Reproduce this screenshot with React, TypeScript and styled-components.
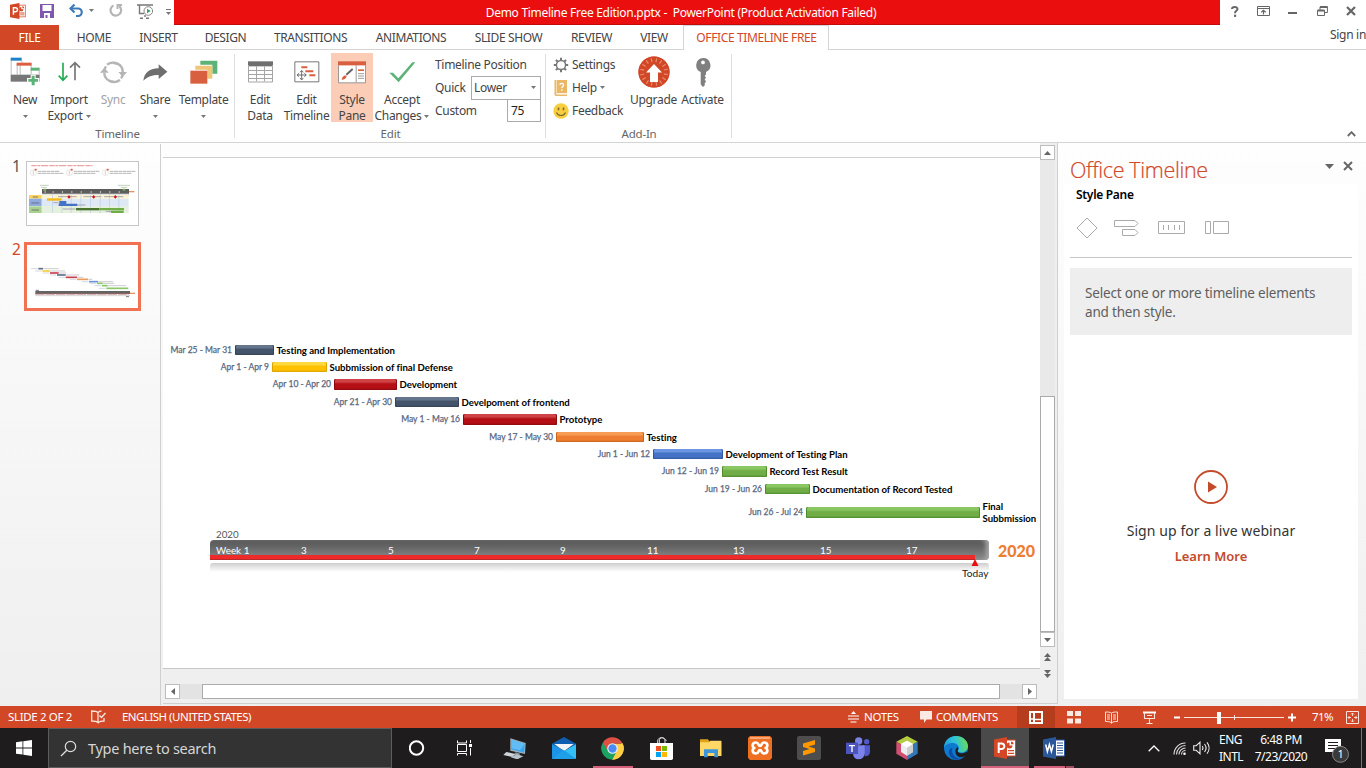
import React from 'react';
import styled, { createGlobalStyle, css } from 'styled-components';

const UI = '"Noto Sans", "Open Sans", sans-serif';
const SLIDE = 'Lato, "Liberation Sans", sans-serif';
const ORANGE = '#d24726';

const Global = createGlobalStyle`
  * { box-sizing: border-box; }
  body { margin: 0; background: #fff; overflow: hidden; font-family: ${UI}; font-size: 12px; letter-spacing: -0.3px; color: #444; }
  svg { display: block; flex: none; }
`;

const Window = styled.div`
  width: 1366px;
  height: 768px;
  display: flex;
  flex-direction: column;
  background: #fff;
  white-space: nowrap;
`;

/* ---------- title bar ---------- */
const TitleBar = styled.header`
  display: flex;
  height: 25px;
`;
const QuickAccess = styled.div`
  width: 174px;
  display: flex;
  align-items: flex-start;
  padding-left: 10px;
`;
const Slot = styled.div<{ $ml?: number; $mt?: number }>`
  margin-left: ${(p) => p.$ml ?? 0}px;
  margin-top: ${(p) => p.$mt ?? 0}px;
`;
const Caption = styled.div`
  width: 1046px;
  background: #ea0f0e;
  border-bottom: 1px solid #c00c0b;
  color: #fff;
  text-align: center;
  line-height: 26px;
  letter-spacing: -0.29px;
  padding-right: 32px;
`;
const WindowControls = styled.div`
  flex: 1;
  display: flex;
  padding-left: 10px;
`;

/* ---------- tabs ---------- */
const TabRow = styled.nav`
  display: flex;
  height: 25px;
  border-bottom: 1px solid #d4d4d4;
  line-height: 26px;
`;
const FileTab = styled.div`
  width: 59px;
  height: 25px;
  margin-right: 2px;
  background: ${ORANGE};
  color: #fff;
  text-align: center;
`;
const Tab = styled.div<{ $w: number; $active?: boolean }>`
  width: ${(p) => p.$w}px;
  text-align: center;
  letter-spacing: -0.38px;
  padding-left: 1px;
  ${(p) =>
    p.$active &&
    css`
      height: 25px;
      margin-left: 3px;
      background: #fff;
      border: 1px solid #d4d4d4;
      border-bottom: none;
      color: ${ORANGE};
      line-height: 24px;
    `}
`;
const SignIn = styled.div`
  margin-left: auto;
  line-height: 20px;
`;

/* ---------- ribbon ---------- */
const Ribbon = styled.section`
  display: flex;
  height: 93px;
  border-bottom: 1px solid #d4d4d4;
`;
const Group = styled.div<{ $w: number; $pl: number }>`
  width: ${(p) => p.$w}px;
  display: flex;
  flex-direction: column;
  padding-top: 3px;
  background: linear-gradient(#dedede, #dedede) right 4px / 1px 84px no-repeat;
  & > div:first-child { padding-left: ${(p) => p.$pl}px; }
`;
const GroupBody = styled.div`
  display: flex;
  height: 72px;
`;
const GroupName = styled.div`
  text-align: center;
  line-height: 18px;
  height: 17px;
  font-size: 11.5px;
  letter-spacing: -0.2px;
  color: #666;
`;
const BigButton = styled.button<{ $w: number; $on?: boolean; $off?: boolean }>`
  width: ${(p) => p.$w}px;
  height: 69px;
  border: 0;
  padding: 0;
  display: flex;
  flex-direction: column;
  align-items: center;
  justify-content: flex-start;
  background: ${(p) => (p.$on ? '#fbcdb7' : 'transparent')};
  color: ${(p) => (p.$off ? '#a3a3a3' : '#444')};
  font: 12px/16px ${UI};
  letter-spacing: -0.3px;
`;
const IconArea = styled.div`
  height: 38px;
  flex: none;
  margin-bottom: 1px;
  display: flex;
  align-items: center;
`;
const BtnLine = styled.span`
  height: 16px;
  flex: none;
  display: flex;
  align-items: center;
  gap: 3px;
`;
const PositionForm = styled.div`
  width: 106px;
  margin-left: 4px;
`;
const FormRow = styled.div`
  display: flex;
  align-items: center;
  justify-content: space-between;
  height: 23px;
`;
const Combo = styled.div`
  width: 70px;
  height: 24px;
  border: 1px solid #ababab;
  display: flex;
  align-items: center;
  justify-content: space-between;
  padding: 0 4px 0 2px;
`;
const NumberBox = styled.div`
  width: 34px;
  height: 23px;
  border: 1px solid #ababab;
  line-height: 21px;
  padding-left: 3px;
  color: #222;
`;
const SmallList = styled.div`
  width: 75px;
`;
const SmallRow = styled.div`
  height: 23px;
  display: flex;
  align-items: center;
  gap: 3px;
`;
const Collapse = styled.div`
  margin-left: auto;
  align-self: flex-end;
  padding: 0 10px 5px 0;
`;

/* ---------- work area ---------- */
const Work = styled.main`
  display: flex;
  height: 563px;
  background: linear-gradient(#fefefe, #efefef);
`;
const Thumbs = styled.aside`
  width: 161px;
  height: 561px;
  border-right: 1px solid #cfcfcf;
  margin-top: 1px;
  padding: 17px 0 0 12px;
`;
const ThumbRow = styled.div<{ $gap?: number }>`
  display: flex;
  margin-bottom: ${(p) => p.$gap ?? 0}px;
`;
const ThumbNo = styled.div<{ $on?: boolean }>`
  width: ${(p) => (p.$on ? 12 : 14)}px;
  font-size: 15.5px;
  line-height: ${(p) => (p.$on ? 14 : 11)}px;
  letter-spacing: 0;
  color: ${(p) => (p.$on ? ORANGE : '#555')};
`;
const ThumbFrame = styled.div<{ $on?: boolean }>`
  border: ${(p) => (p.$on ? '3px solid #f07252' : '1px solid #c6c6c6')};
  background: #fff;
`;
const Editor = styled.div`
  width: 895px;
  margin-left: 2px;
  height: 561px;
  border-bottom: 1px solid #cfcfcf;
  border-right: 1px solid #cfcfcf;
  display: grid;
  grid-template-columns: 877px 1fr;
  grid-template-rows: 526px 1fr;
`;
const SlideWrap = styled.div`
  padding-top: 14px;
  height: 526px;
  background: #fdfdfd;
`;
const SlideCanvas = styled.div`
  position: relative;
  height: 512px;
  background: #fff;
  border-top: 1px solid #cfcfcf;
  border-bottom: 1px solid #c6c6c6;
  font-family: ${SLIDE};
  font-variant-ligatures: none;
`;
const Task = styled.div<{ $x: number; $y: number }>`
  position: absolute;
  right: ${(p) => 877 - p.$x}px;
  top: ${(p) => p.$y}px;
  display: flex;
  align-items: flex-start;
  gap: 3px;
`;
const TaskDate = styled.span`
  font-size: 8.5px;
  letter-spacing: 0;
  color: #5a6880;
  line-height: 11px;
  -webkit-text-stroke: 0.25px #5a6880;
`;
const TaskBar = styled.div<{ $w: number; $h: number; $c: string; $hi: string; $lo: string }>`
  width: ${(p) => p.$w}px;
  height: ${(p) => p.$h}px;
  border-radius: 1.5px;
  background: linear-gradient(${(p) => p.$hi} 0, ${(p) => p.$hi} 25%, ${(p) => p.$c} 45%, ${(p) => p.$c} 80%, ${(p) => p.$lo});
  box-shadow: inset 1px 0 0 ${(p) => p.$lo}, inset -1px 0 0 ${(p) => p.$lo};
`;
const TaskName = styled.div`
  position: absolute;
  left: 100%;
  margin-left: 2.5px;
  top: 0;
  font-size: 9.6px;
  font-weight: 700;
  letter-spacing: 0;
  line-height: 12px;
  color: #000;
`;
const Band = styled.div`
  position: absolute;
  left: 47px;
  top: 382px;
  width: 779px;
  height: 20px;
  border-radius: 4px;
  background: linear-gradient(#5a5a5a, #636363 30%, #8c8c8c);
  box-shadow: inset -5px 0 4px -2px #a8a8a8;
`;
const Elapsed = styled.div`
  position: absolute;
  left: 0;
  bottom: 0;
  width: 765px;
  height: 5px;
  background: #ee2a2a;
  border-bottom: 1px solid #b82a2a;
`;
const Reflection = styled.div`
  position: absolute;
  left: 47px;
  top: 405px;
  width: 779px;
  height: 9px;
  border-radius: 3px 3px 0 0;
  background: linear-gradient(#cdcdcd, #e6e6e6 45%, #fff);
`;
const Note = styled.span<{ $x: number; $y: number; $s: number; $c: string; $b?: boolean }>`
  position: absolute;
  left: ${(p) => p.$x}px;
  top: ${(p) => p.$y}px;
  font-size: ${(p) => p.$s}px;
  line-height: 14px;
  letter-spacing: 0;
  color: ${(p) => p.$c};
  font-weight: ${(p) => (p.$b ? 900 : 400)};
`;
const TodayMark = styled.svg`
  position: absolute;
  left: 808px;
  top: 400px;
`;
const VScroll = styled.div`
  height: 526px;
  padding-top: 2px;
  display: flex;
  flex-direction: column;
  align-items: flex-start;
  background: #efefef;
`;
const ScrollButton = styled.div<{ $bare?: boolean }>`
  width: 15px;
  height: 15px;
  border: 1px solid ${(p) => (p.$bare ? 'transparent' : '#bdbdbd')};
  background: ${(p) => (p.$bare ? 'transparent' : '#fff')};
  display: flex;
  align-items: center;
  justify-content: center;
`;
const VTrack = styled.div`
  width: 15px;
  height: 236px;
  background: #e9e9e9;
`;
const VThumb = styled.div`
  width: 15px;
  height: 236px;
  background: #fff;
  border: 1px solid #ababab;
`;
const HScroll = styled.div`
  display: flex;
  padding: 15px 0 0 2px;
  background: #efefef;
`;
const HTrack = styled.div<{ $w: number }>`
  width: ${(p) => p.$w}px;
  height: 15px;
  background: #e3e3e3;
`;
const HThumb = styled.div`
  width: 798px;
  height: 15px;
  background: #fff;
  border: 1px solid #ababab;
`;
const ScrollTail = styled.div`
  background: #efefef;
  display: flex;
  flex-direction: column;
  align-items: flex-start;
`;

/* ---------- style pane ---------- */
const Pane = styled.aside`
  flex: 1;
  padding: 12px 8px 7px 6px;
  display: flex;
  flex-direction: column;
`;
const PaneHead = styled.div`
  height: 29px;
  display: flex;
  align-items: center;
  padding: 0 5px 0 6px;
`;
const PaneTitle = styled.h1`
  margin: 0;
  flex: 1;
  font: 300 21.5px/28px "Open Sans", "Noto Sans", sans-serif;
  letter-spacing: -0.35px;
  color: ${ORANGE};
  -webkit-text-stroke: 0.2px ${ORANGE};
`;
const PaneBody = styled.div`
  flex: 1;
  background: #fff;
  padding: 0 6px;
  display: flex;
  flex-direction: column;
`;
const PaneSub = styled.h2`
  margin: 0 0 0 6px;
  font: 600 12px/22px ${UI};
  letter-spacing: -0.3px;
  color: #000;
`;
const ToolRow = styled.div`
  height: 52px;
  display: flex;
  align-items: center;
  padding: 0 0 8px 6px;
  border-bottom: 1px solid #c6c6c6;
`;
const Hint = styled.p`
  margin: 10px 0 0;
  height: 67px;
  padding: 16px 15px;
  background: #eee;
  font-size: 13.5px;
  line-height: 19px;
  letter-spacing: -0.18px;
  color: #5e5e5e;
`;
const Webinar = styled.div`
  margin-top: 135px;
  display: flex;
  flex-direction: column;
  align-items: center;
  font-size: 14px;
  letter-spacing: 0.08px;
  color: #333;
`;
const WebinarText = styled.div`
  margin-top: 14px;
  line-height: 26px;
`;
const LearnMore = styled.a`
  font-size: 13px;
  font-weight: 600;
  line-height: 25px;
  letter-spacing: 0;
  color: #c34a2b;
`;

/* ---------- status bar ---------- */
const StatusBar = styled.footer`
  height: 22px;
  background: ${ORANGE};
  color: #fff;
  display: flex;
  align-items: center;
  font-size: 11.5px;
  padding-left: 8px;
`;
const StatusText = styled.div<{ $w: number; $ls?: number }>`
  width: ${(p) => p.$w}px;
  letter-spacing: ${(p) => p.$ls ?? -0.35}px;
  line-height: 20px;
`;
const ViewButton = styled.div<{ $w: number; $on?: boolean }>`
  width: ${(p) => p.$w}px;
  height: 22px;
  display: flex;
  align-items: center;
  justify-content: center;
  background: ${(p) => (p.$on ? '#b53c1d' : 'transparent')};
`;

/* ---------- taskbar ---------- */
const TaskbarRow = styled.div`
  height: 40px;
  display: flex;
  background: #1e1c1c;
  color: #fff;
`;
const StartButton = styled.div`
  width: 48px;
  display: flex;
  align-items: center;
  justify-content: center;
`;
const Search = styled.div`
  width: 344px;
  border: 1px solid #5c5c5c;
  background: #333;
  display: flex;
  align-items: center;
  gap: 11px;
  padding-left: 11px;
  font-size: 14.5px;
  letter-spacing: -0.28px;
  color: #d6d6d6;
`;
const AppButton = styled.div<{ $on?: boolean; $line?: string }>`
  width: 49px;
  display: flex;
  align-items: center;
  justify-content: center;
  background:
    ${(p) => p.$line ?? 'linear-gradient(transparent, transparent)'},
    ${(p) => (p.$on ? 'linear-gradient(#4b4a4a, #4b4a4a) right / 48px 100% no-repeat' : 'none')};
`;
const Tray = styled.div`
  margin-left: auto;
  display: flex;
  align-items: center;
`;
const TrayText = styled.div<{ $w: number; $c?: boolean }>`
  width: ${(p) => p.$w}px;
  line-height: 17px;
  text-align: ${(p) => (p.$c ? 'center' : 'left')};
  letter-spacing: -0.5px;
`;
const ShowDesktop = styled.div`
  width: 5px;
  height: 40px;
  border-left: 1px solid #757575;
`;

/* ---------- icon helpers ---------- */
type ArtProps = { w: number; h: number; box?: string; children: React.ReactNode };
const Art = ({ w, h, box, children }: ArtProps) => (
  <svg width={w} height={h} viewBox={box ?? `0 0 ${w} ${h}`} fill="none">
    {children}
  </svg>
);
const Down = ({ c = '#777', w = 5, h = 3 }: { c?: string; w?: number; h?: number }) => (
  <Art w={w} h={h}>
    <path d={`M0 0h${w}L${w / 2} ${h}z`} fill={c} />
  </Art>
);

const PptGlyph = ({ w, h }: { w: number; h: number }) => (
  <Art w={w} h={h} box="0 0 22 22">
    <path d="M12 3h9.500v16H12z" fill="#fff" stroke={ORANGE} strokeWidth="1" />
    <path d="M15.500 5.500a3 3 0 1 0 3 3h-3z" fill={ORANGE} />
    <path d="M17 4.500a3 3 0 0 1 2.800 2.800H17zM14 13h6v1.300h-6zM14 15.700h6V17h-6z" fill={ORANGE} />
    <path d="M0 2.500 13 0v22L0 19.500z" fill={ORANGE} />
    <path d="M4.700 16V6.500h2.800a2.600 2.600 0 0 1 0 5.600H4.700" stroke="#fff" strokeWidth="2" />
  </Art>
);

const NewIcon = () => (
  <Art w={31} h={30} box="31 175 93 90">
    <path d="M34.500 186v42M52.500 194v34M61.500 200v28M94.500 200v28M118.500 216v12M67 186v6" stroke="#bbb" strokeWidth="3" />
    <path d="M33 177h33v9H33z" fill="#1a82c6" />
    <path d="M51 192h45v9H51z" fill="#dc5f41" />
    <path d="M93 207h27v9H93z" fill="#5cb377" />
    <path d="M33 228h87v21H33z" fill="#777" />
    <path d="M93 228h15v10h11v15h-11v9H93v-9H82v-15h11z" fill="#fff" />
    <path d="M96 231h9v10h10v8h-10v11h-9v-11H86v-8h10z" fill="#5cb377" />
  </Art>
);
const ImportIcon = () => (
  <Art w={24} h={22} box="171 183 72 66">
    <path d="M189 188v53M176 227l13 14 13-14" stroke="#23ad52" strokeWidth="5" />
    <path d="M225 241v-52M210 203l15-15 15 15" stroke="#777" strokeWidth="5" />
  </Art>
);
const SyncIcon = () => (
  <Art w={27} h={23} box="300 182 81 69">
    <path d="M321 193a29 27 0 0 1 47 22M360 239a29 27 0 0 1-47-22" stroke="#b5b5b5" strokeWidth="7" />
    <path d="M313 212a28 26 0 0 1 5-14M368 220a28 26 0 0 1-5 14M327 241a29 27 0 0 0 15 3M354 191a29 27 0 0 0-15-3" stroke="#b5b5b5" strokeWidth="7" />
    <path d="m300 217 13-15 13 15zM355 215l13 15 13-15z" fill="#b5b5b5" />
  </Art>
);
const ShareIcon = () => (
  <Art w={25} h={17} box="429 190 75 51">
    <path d="M430 240c3-22 16-37 46-37v-12l26 22-26 22v-12c-20 0-32 4-46 17z" fill="#6e6e6e" />
  </Art>
);
const TemplateIcon = () => (
  <Art w={28} h={24} box="566 181 84 72">
    <path d="M597 183h51v39h-15v-27h-36z" fill="#5cb377" />
    <path d="M582 198h51v39h-15v-27h-36z" fill="#eec579" />
    <path d="M567 213h51v39h-51z" fill="#d95f41" />
  </Art>
);
const GridIcon = () => (
  <Art w={25} h={22} box="744 188 75 66">
    <path d="M744 189h75v15h-75z" fill="#6f6f6f" />
    <path d="M745.500 200v51h72v-51M769.500 204v45M793.500 204v45M745 216.500h73M745 228.500h73M745 240.500h73" stroke="#a5a5a5" strokeWidth="3" />
  </Art>
);
const EditTimelineIcon = () => (
  <Art w={26} h={22} box="881 188 78 66">
    <path d="M883.500 190.500h72v60h-72z" stroke="#777" strokeWidth="3" fill="#fff" />
    <path d="M903 204h18v6h-18zM915 216h24v6h-24zM927 228h18v6h-18z" fill="#d95f41" />
    <path d="M904 218v25M892 230h25M899 222l5-6 5 6M899 239l5 6 5-6M896 225l-6 5 6 5M912 225l6 5-6 5" stroke="#555" strokeWidth="2.500" />
  </Art>
);
const StylePaneIcon = () => (
  <Art w={28} h={23} box="24 185 84 69">
    <path d="M25.500 198v52.500h81V198M78.500 198v52" stroke="#999" strokeWidth="3" fill="#fff" />
    <path d="M24 186h84v12H24z" fill="#d95f41" />
    <path d="M84 210h18v5H84z" fill="#d95f41" />
    <path d="M84 223h18M84 230h18M84 237h18" stroke="#888" strokeWidth="2.500" />
    <path d="M68 209 49 226" stroke="#666" strokeWidth="6" />
    <path d="M35 241c1-10 8-15 15-12-1 8-6 12-15 12z" fill="#d95f41" />
  </Art>
);
const AcceptIcon = () => (
  <Art w={27} h={21} box="176 184 81 63">
    <path d="M177 216h11l16 17 42-48h9l-50 60z" fill="#5cb377" />
  </Art>
);
const Gear = () => (
  <Art w={16} h={16}>
    <circle cx="8" cy="8" r="4.600" stroke="#777" strokeWidth="1.500" />
    {[0, 45, 90, 135, 180, 225, 270, 315].map((a) => (
      <path key={a} d="M8 3.500V.8" stroke="#777" strokeWidth="2" transform={`rotate(${a} 8 8)`} />
    ))}
  </Art>
);
const HelpBook = () => (
  <Art w={16} h={16}>
    <path d="M1.500 0H14v13H3.500v1.500H14V16H2.500L1.500 15z" fill="#eab765" />
    <path d="M3.500 0v13M3 14.200h10.500" stroke="#f7ddb0" strokeWidth="1" />
    <path d="M6.800 4.800c.4-2 4.200-1.700 3.700.5-.4 1.200-1.700 1.200-1.700 2.700M8.800 9.300v1.500" stroke="#fff" strokeWidth="1.300" />
  </Art>
);
const Smile = () => (
  <Art w={16} h={16}>
    <circle cx="8" cy="8" r="7.700" fill="#f9cf3f" />
    <path d="M5.500 4.500v2.700M10.500 4.500v2.700" stroke="#7d6a30" strokeWidth="1.600" />
    <path d="M3.500 9.500c1.700 4 7.300 4 9 0" stroke="#7d6a30" strokeWidth="1.200" />
  </Art>
);
const UpgradeIcon = () => (
  <Art w={32} h={32}>
    <circle cx="16" cy="16" r="15.500" fill="#d24726" />
    {Array.from({ length: 16 }, (_, i) => (
      <path key={i} d="M16 6V2" stroke="#e88a70" strokeWidth="1.200" transform={`rotate(${i * 22.5 + 11} 16 16)`} />
    ))}
    <circle cx="16" cy="16" r="15" stroke="#d24726" strokeWidth="1.200" />
    <path d="m16 8 8 8.500h-4V26h-8v-9.500H8z" fill="#fff" />
  </Art>
);
const KeyIcon = () => (
  <Art w={16} h={31}>
    <path fillRule="evenodd" d="M8 1a7.300 7.300 0 0 1 3 14v2.500l-1.300 1.500 1.300 1.500-1.300 2 1.300 2-1.300 2v2L8 30l-2.300-2.500V15A7.300 7.300 0 0 1 8 1zm0 2.500a1.900 1.900 0 1 0 0 3.800 1.900 1.900 0 0 0 0-3.800z" fill="#808080" />
  </Art>
);

const Thumb1 = () => (
  <Art w={111} h={63} box="81 51 333 189">
    <path d="M94 62h184" stroke="#eba3a6" strokeWidth="4" strokeDasharray="16 2 9 2 22 3" />
    {[100, 208, 316].map((x, i) => (
      <g key={x}>
        <circle cx={x} cy="83" r="9" stroke="#ddd" strokeWidth="2" />
        <path d={`M${x + 4} 74h6`} stroke="#e2553f" strokeWidth="5" />
        <path d={`M${x} 77v12`} stroke="#daa" strokeWidth="2" />
        <path d={`M${x + 13} 79h${i === 0 ? 66 : 78}M${x + 13} 85h${i === 0 ? 78 : 66}`} stroke="#b5b5b5" strokeWidth="3" strokeDasharray="12 1" />
      </g>
    ))}
    <path d="M120 121h26M123 127h18M354 121h36M362 127h20" stroke="#c5d0bf" strokeWidth="3" />
    <path d="M126 132h261v14H126z" fill="#5d5d5d" />
    <path d="M126 148h261v4H126z" fill="#d8d8d8" />
    <path d="M387 140h16" stroke="#ef8b62" strokeWidth="4" />
    <path d="M130 131h8v7h-8zM368 131h8v6h-8z" fill="#70ad47" />
    {[134, 158, 186, 214, 242, 272, 300, 328, 356].map((x) => (
      <path key={x} d={`M${x} 141h3`} stroke="#ddd" strokeWidth="4" />
    ))}
    <path d="M126 150h260v11H126z" fill="#fff3d1" />
    <path d="M126 161h260v22H126z" fill="#dfe8f5" />
    <path d="M126 183h260v21H126z" fill="#e6f0df" />
    <path d="M157.500 150v54M185.500 150v54M213.500 150v54M242.500 150v54M271.500 150v54M300.500 150v54M328.500 150v54M356.500 150v54" stroke="#b8cfe6" strokeWidth="2" />
    <path d="M87 150h38v11H87z" fill="#ffd35c" />
    <path d="M87 161h38v22H87z" fill="#8faadc" />
    <path d="M87 184h38v20H87z" fill="#a9d18e" />
    <path d="M98 156h16M94 174h24M95 195h22" stroke="#667" strokeWidth="2.500" />
    <path d="M174 155h56M250 155h54M312 155h58" stroke="#99a" strokeWidth="2.500" />
    <path d="m207 150 5 6-5 5-5-5zM281 150l5 6-5 5-5-5zM346 150l5 6-5 5-5-5z" fill="#d3151c" />
    <path d="M141 160h43v7h-43z" fill="#f4b912" />
    <path d="M178 168h21v9h-21zM176 176h56v7h-56z" fill="#4472c4" />
    <path d="M160 173h16M232 180h24M188 192h38M317 199h16" stroke="#99a" strokeWidth="2.500" />
    <path d="M228 189h70v7h-70z" fill="#4b7432" />
    <path d="M298 189h74v7h-74zM333 197h38v7h-38z" fill="#70ad47" />
  </Art>
);
const thumbBars: [number, number, number, string][] = [
  [115, 371, 14, '#5b6f8c'], [127, 378, 23, '#f6cf3a'], [150, 384, 26, '#c8404a'], [171, 390, 26, '#5b6f8c'],
  [197, 397, 34, '#c8404a'], [231, 403, 33, '#ed9a5c'], [267, 410, 27, '#6a94dc'], [291, 415, 17, '#8cc66b'],
  [306, 422, 17, '#8cc66b'], [319, 430, 66, '#8cc66b'],
];
const Thumb2 = () => (
  <Art w={111} h={63} box="81 300 333 189">
    {thumbBars.map(([x, y, w, c], i) => (
      <g key={i}>
        <path d={`M${x - 22} ${y}h20`} stroke="#d5d9e0" strokeWidth="3" />
        <path d={`M${x} ${y}h${w}`} stroke={c} strokeWidth="5" />
        {i < 9 && <path d={`M${x + w + 1} ${y}h${[46, 44, 22, 40, 18, 12, 44, 34, 54][i]}`} stroke="#c2c2c2" strokeWidth="2.500" />}
      </g>
    ))}
    <path d="M106 438h284v9H106z" fill="#636363" />
    <path d="M106 447h281" stroke="#b56a6a" strokeWidth="3" strokeDasharray="28 3" />
    <path d="M106 452h284" stroke="#d5d5d5" strokeWidth="3" />
    <path d="M390 445h15" stroke="#ee9060" strokeWidth="4" />
    <path d="M378 455h9M107 436h10" stroke="#777" strokeWidth="3" />
  </Art>
);

/* ---------- data ---------- */
const navy = ['#44546a', '#65758c', '#344258'];
const gold = ['#ffc000', '#ffd940', '#d9a300'];
const red = ['#b30f14', '#cf4346', '#8c0a0e'];
const amber = ['#ed7d31', '#f79c55', '#c9621c'];
const blue = ['#4472c4', '#6c96e2', '#31589f'];
const green = ['#70ad47', '#8ac763', '#4f8a2c'];

type TaskItem = { date: string; name: React.ReactNode; x: number; y: number; end: number; h?: number; c: string[] };
const tasks: TaskItem[] = [
  { date: 'Mar 25 - Mar 31', name: 'Testing and Implementation', x: 235, end: 274, y: 345, c: navy },
  { date: 'Apr 1 - Apr 9', name: 'Subbmission of final Defense', x: 272, end: 327, y: 362, c: gold },
  { date: 'Apr 10 - Apr 20', name: 'Development', x: 334, end: 397, y: 379, h: 11, c: red },
  { date: 'Apr 21 - Apr 30', name: 'Develpoment of frontend', x: 395, end: 459, y: 397, c: navy },
  { date: 'May 1 - May 16', name: 'Prototype', x: 463, end: 557, y: 414, h: 11, c: red },
  { date: 'May 17 - May 30', name: 'Testing', x: 556, end: 644, y: 432, c: amber },
  { date: 'Jun 1 - Jun 12', name: 'Development of Testing Plan', x: 653, end: 723, y: 449, c: blue },
  { date: 'Jun 12 - Jun 19', name: 'Record Test Result', x: 722, end: 767, y: 466, h: 11, c: green },
  { date: 'Jun 19 - Jun 26', name: 'Documentation of Record Tested', x: 765, end: 810, y: 484, c: green },
  { date: 'Jun 26 - Jul 24', name: <>Final<br />Subbmission</>, x: 806, end: 980, y: 507, h: 11, c: green },
];
const weeks: [string, number][] = [
  ['Week 1', 216], ['3', 301], ['5', 388], ['7', 474], ['9', 560], ['11', 647], ['13', 733], ['15', 820], ['17', 906],
];
const tabs: [string, number][] = [
  ['HOME', 65], ['INSERT', 64], ['DESIGN', 70], ['TRANSITIONS', 100], ['ANIMATIONS', 101], ['SLIDE SHOW', 94], ['REVIEW', 72], ['VIEW', 53],
];

const Multi = styled(TaskName)`
  top: -6px;
`;

/* ---------- sections ---------- */
const Title = () => (
  <TitleBar>
    <QuickAccess>
      <Slot $mt={3}><PptGlyph w={16} h={16} /></Slot>
      <Slot $ml={14} $mt={4}>
        <Art w={14} h={14}>
          <path d="M0 0h14v14H0z" fill="#8256ad" />
          <path d="M2.500 1h9v6h-9z" fill="#fff" />
          <path d="M4 9h6v5H4z" fill="#fff" />
          <path d="M5.500 11h2v3h-2z" fill="#8256ad" />
        </Art>
      </Slot>
      <Slot $ml={15} $mt={4}>
        <Art w={14} h={13}>
          <path d="M1.500 4.500H9a3.700 3.700 0 0 1 0 7.500H7" stroke="#3f7ab8" strokeWidth="2.200" />
          <path d="M5.500.5 1.500 4.500l4 4" stroke="#3f7ab8" strokeWidth="2.200" />
        </Art>
      </Slot>
      <Slot $ml={6} $mt={9}><Down /></Slot>
      <Slot $ml={15} $mt={3}>
        <Art w={14} h={14}>
          <path d="M4.500 2.500a5.300 5.300 0 1 0 5.500.5" stroke="#b5b5b5" strokeWidth="2.200" />
          <path d="M8.500 1v5M8 2h5" stroke="#b5b5b5" strokeWidth="2" />
        </Art>
      </Slot>
      <Slot $ml={14} $mt={4}>
        <Art w={16} h={15}>
          <path d="M0 1h16M2.500 1v8.500H7M8 13v-2M3 14.300h3M9 14.300h3" stroke="#777" strokeWidth="1.400" />
          <circle cx="11.300" cy="7" r="4.300" fill="#fff" stroke="#888" strokeWidth="1" />
          <path d="m10 4.700 3.800 2.300-3.800 2.300z" fill="#3fa06a" />
        </Art>
      </Slot>
      <Slot $ml={13} $mt={9}>
        <Art w={5} h={6}><path d="M0 .5h5" stroke="#777" /><path d="M0 3h5L2.500 6z" fill="#777" /></Art>
      </Slot>
    </QuickAccess>
    <Caption>Demo Timeline Free Edition.pptx -&nbsp; PowerPoint (Product Activation Failed)</Caption>
    <WindowControls>
      <Slot $ml={1} $mt={6}>
        <Art w={8} h={11}>
          <path d="M1 3C1 .5 6.500.3 6.500 3 6.500 5 4 4.700 4 7.300" stroke="#666" strokeWidth="2" />
          <path d="M3 8.700h2.200v2.200H3z" fill="#666" />
        </Art>
      </Slot>
      <Slot $ml={18} $mt={6}>
        <Art w={13} h={10}>
          <path d="M.5.500h12v9H.5zM.5 2.500h12" stroke="#666" />
          <path d="M6.500 8.500V4.500M4.300 6.300l2.200-2 2.200 2" stroke="#666" strokeWidth="1.200" />
        </Art>
      </Slot>
      <Slot $ml={18} $mt={12}><Art w={9} h={2}><path d="M0 0h9v2H0z" fill="#666" /></Art></Slot>
      <Slot $ml={20} $mt={6}>
        <Art w={11} h={10}>
          <path d="M.5 4.500h7v5h-7zM3 4V.8h7.400v5.700H8" stroke="#666" />
          <path d="M.5 4.500h7M3 1h7.500" stroke="#666" strokeWidth="2" />
        </Art>
      </Slot>
      <Slot $ml={18} $mt={6}>
        <Art w={10} h={10}><path d="m1 1 8 8M9 1 1 9" stroke="#666" strokeWidth="2.200" /></Art>
      </Slot>
    </WindowControls>
  </TitleBar>
);

const RibbonBar = () => (
  <Ribbon>
    <Group $w={235} $pl={4}>
      <GroupBody>
        <BigButton $w={42}><IconArea><NewIcon /></IconArea><BtnLine>New</BtnLine><BtnLine><Down /></BtnLine></BigButton>
        <BigButton $w={46}><IconArea><ImportIcon /></IconArea><BtnLine>Import</BtnLine><BtnLine>Export<Down /></BtnLine></BigButton>
        <BigButton $w={42} $off><IconArea><SyncIcon /></IconArea><BtnLine>Sync</BtnLine></BigButton>
        <BigButton $w={42}><IconArea><ShareIcon /></IconArea><BtnLine>Share</BtnLine><BtnLine><Down /></BtnLine></BigButton>
        <BigButton $w={55}><IconArea><TemplateIcon /></IconArea><BtnLine>Template</BtnLine><BtnLine><Down /></BtnLine></BigButton>
      </GroupBody>
      <GroupName>Timeline</GroupName>
    </Group>
    <Group $w={311} $pl={3}>
      <GroupBody>
        <BigButton $w={44}><IconArea><GridIcon /></IconArea><BtnLine>Edit</BtnLine><BtnLine>Data</BtnLine></BigButton>
        <BigButton $w={49}><IconArea><EditTimelineIcon /></IconArea><BtnLine>Edit</BtnLine><BtnLine>Timeline</BtnLine></BigButton>
        <BigButton $w={42} $on><IconArea><StylePaneIcon /></IconArea><BtnLine>Style</BtnLine><BtnLine>Pane</BtnLine></BigButton>
        <BigButton $w={58}><IconArea><AcceptIcon /></IconArea><BtnLine>Accept</BtnLine><BtnLine>Changes<Down /></BtnLine></BigButton>
        <PositionForm>
          <FormRow>Timeline Position</FormRow>
          <FormRow>Quick<Combo>Lower<Down /></Combo></FormRow>
          <FormRow>Custom<NumberBox>75</NumberBox></FormRow>
        </PositionForm>
      </GroupBody>
      <GroupName>Edit</GroupName>
    </Group>
    <Group $w={186} $pl={7}>
      <GroupBody>
        <SmallList>
          <SmallRow><Gear />Settings</SmallRow>
          <SmallRow><HelpBook />Help<Down /></SmallRow>
          <SmallRow><Smile />Feedback</SmallRow>
        </SmallList>
        <BigButton $w={51}><IconArea><UpgradeIcon /></IconArea><BtnLine>Upgrade</BtnLine></BigButton>
        <BigButton $w={47}><IconArea><KeyIcon /></IconArea><BtnLine>Activate</BtnLine></BigButton>
      </GroupBody>
      <GroupName>Add-In</GroupName>
    </Group>
    <Collapse><Art w={9} h={6}><path d="m.8 5 3.700-3.800L8.200 5" stroke="#666" strokeWidth="1.800" /></Art></Collapse>
  </Ribbon>
);

const Slide = () => (
  <SlideCanvas>
    {tasks.map((t) => (
      <Task key={t.date} $x={t.end - 163} $y={t.y - 158}>
        <TaskDate>{t.date}</TaskDate>
        <TaskBar $w={t.end - t.x} $h={t.h ?? 10} $c={t.c[0]} $hi={t.c[1]} $lo={t.c[2]} />
        {typeof t.name === 'string' ? <TaskName>{t.name}</TaskName> : <Multi>{t.name}</Multi>}
      </Task>
    ))}
    <Note $x={53} $y={369} $s={9.8} $c="#555">2020</Note>
    <Reflection />
    <Band><Elapsed /></Band>
    {weeks.map(([label, x]) => (
      <Note key={label} $x={x - 163} $y={385} $s={9.9} $c="#fff">{label}</Note>
    ))}
    <TodayMark width="8" height="8"><path d="M4 1 7.500 8h-7z" fill="#e8100f" /></TodayMark>
    <Note $x={799} $y={408} $s={10.2} $c="#222">Today</Note>
    <Note $x={835} $y={386} $s={16} $c="#ed7d31" $b>2020</Note>
  </SlideCanvas>
);

const StylePane = () => (
  <Pane>
    <PaneHead>
      <PaneTitle>Office Timeline</PaneTitle>
      <Slot $mt={-7}><Down w={9} h={5} c="#666" /></Slot>
      <Slot $ml={9} $mt={-7}><Art w={10} h={10}><path d="m1 1 8 8M9 1 1 9" stroke="#666" strokeWidth="2" /></Art></Slot>
    </PaneHead>
    <PaneBody>
      <PaneSub>Style Pane</PaneSub>
      <ToolRow>
        <Art w={22} h={22}><path d="M11 1 21 11 11 21 1 11z" stroke="#aaa" /></Art>
        <Slot $ml={16}>
          <Art w={25} h={17}>
            <path d="M.5 1.500h20.500l3 3-3 3H.5zM8.500 10.500h12.500l3 3-3 3H8.500z" stroke="#aaa" />
          </Art>
        </Slot>
        <Slot $ml={19}>
          <Art w={27} h={13}>
            <path d="M.5.500h26v12H.5z" stroke="#aaa" />
            <path d="M5.500 4v5M10.500 4v5M16.500 4v5M21.500 4v5" stroke="#aaa" />
          </Art>
        </Slot>
        <Slot $ml={20}>
          <Art w={24} h={13}><path d="M.5.500h5v12h-5zM8.500.500h15v12h-15z" stroke="#aaa" /></Art>
        </Slot>
      </ToolRow>
      <Hint>Select one or more timeline elements<br />and then style.</Hint>
      <Webinar>
        <Art w={34} h={34}>
          <circle cx="17" cy="17" r="16" stroke="#c34a2b" strokeWidth="1.800" />
          <path d="m14 11.500 9 5.500-9 5.500z" fill="#c34a2b" />
        </Art>
        <WebinarText>Sign up for a live webinar</WebinarText>
        <LearnMore>Learn More</LearnMore>
      </Webinar>
    </PaneBody>
  </Pane>
);

const Status = () => (
  <StatusBar>
    <StatusText $w={83}>SLIDE 2 OF 2</StatusText>
    <Art w={15} h={14}>
      <path d="M7 2.500C5.500 1 3 1 .7 1v10C3 11 5.500 11 7 12.500V2.500C8 1.500 9 1 10.500 1M7 12.500c1.500-1 3.500-1.500 6-1.500V8" stroke="#fbe3dc" strokeWidth="1.300" />
      <path d="m8.500 5.500 2 2 4-4.500" stroke="#fbe3dc" strokeWidth="1.500" />
    </Art>
    <Slot $ml={16}><StatusText $w={726} $ls={-0.52}>ENGLISH (UNITED STATES)</StatusText></Slot>
    <Art w={11} h={12}>
      <path d="M5.500 0 8 3H3z" fill="#fff" />
      <path d="M0 5h11M0 8h11M2.500 11h6" stroke="#fff" strokeWidth="1.200" />
    </Art>
    <Slot $ml={5}><StatusText $w={56}>NOTES</StatusText></Slot>
    <Art w={12} h={12}><path d="M0 0h12v8.500H6.500L4 12V8.500H0z" fill="#fbe9e4" /></Art>
    <Slot $ml={4}><StatusText $w={81}>COMMENTS</StatusText></Slot>
    <ViewButton $w={38} $on>
      <Art w={14} h={13}>
        <path d="M1 1h12v11H1zM5 1v11" stroke="#fff" strokeWidth="2" />
        <path d="M5 8.500h8" stroke="#fff" strokeWidth="1.500" />
        <path d="M1 8h4" stroke="#fff" strokeWidth="1.500" />
      </Art>
    </ViewButton>
    <ViewButton $w={38}>
      <Art w={15} h={14}><path d="M0 1h6v5H0zM8 1h6v5H8zM0 8.500h6v5H0zM8 8.500h6v5H8z" fill="#fbe9e4" /></Art>
    </ViewButton>
    <ViewButton $w={37}>
      <Art w={13} h={13}>
        <path d="M.5 1C3 1 5 1 6.500 2 8 1 10 1 12.500 1v9.500c-2.500 0-4.500 0-6 1.500-1.500-1.500-3.500-1.500-6-1.500zM6.500 2v10.500" stroke="#fbe3dc" />
        <path d="M2 4h3M2 6h3M2 8h3M8 4h3M8 6h3M8 8h3" stroke="#fbe3dc" />
      </Art>
    </ViewButton>
    <ViewButton $w={39}>
      <Art w={13} h={13}>
        <path d="M0 1.500h13" stroke="#fff" strokeWidth="2" />
        <path d="M1.500 2v5.500h10V2M4 4.500h5M6.500 8v4M3.500 12.500h6" stroke="#fbe3dc" strokeWidth="1.100" />
      </Art>
    </ViewButton>
    <Slot $ml={4}><Art w={124} h={13}>
      <path d="M1 6.500h6M115 6.500h8M119 2.500v8" stroke="#fff" strokeWidth="2" />
      <path d="M11 6.500h100M61.500 4v5" stroke="#fbe3dc" />
      <path d="M44 1h4v12h-4z" fill="#fff" />
    </Art></Slot>
    <Slot $ml={15}><StatusText $w={34} $ls={-0.6}>71%</StatusText></Slot>
    <Art w={13} h={13}>
      <path d="M.5.500h12v12H.5z" stroke="#fbe3dc" />
      <path d="M6.500 2v3M6.500 8v3M2 6.500h3M8 6.500h3M5 3.500l1.500-1.500L8 3.500M5 9.500 6.500 11 8 9.500M3.500 5 2 6.500 3.500 8M9.500 5 11 6.500 9.500 8" stroke="#fbe3dc" strokeWidth=".9" />
    </Art>
  </StatusBar>
);

const pink = (x: number, w: number, c = '#d4607c') => `linear-gradient(${c}, ${c}) ${x}px bottom / ${w}px 2px no-repeat`;

const Taskbar = () => (
  <TaskbarRow>
    <StartButton>
      <Art w={16} h={16}>
        <path d="M0 2.200 6.500 1.300v6.200H0zM7.300 1.200 16 0v7.500H7.300zM0 8.400h6.500v6.200L0 13.700zM7.300 8.400H16V16l-8.700-1.200z" fill="#fff" />
      </Art>
    </StartButton>
    <Search>
      <Art w={17} h={17}><circle cx="10.500" cy="6.500" r="5.200" stroke="#ddd" strokeWidth="1.200" /><path d="M6.800 10.200 1 16" stroke="#ddd" strokeWidth="1.300" /></Art>
      Type here to search
    </Search>
    <AppButton><Art w={16} h={16}><circle cx="7.500" cy="8" r="6.700" stroke="#fff" strokeWidth="2" /></Art></AppButton>
    <AppButton>
      <Art w={17} h={16}>
        <path d="M.5 4.500h9v7h-9zM.5.500V3h9V.5M.5 15.500v-2h9v2M13.500 0v3M13.500 8v7.500" stroke="#fff" />
        <path d="M12 4h3v3h-3z" fill="#fff" />
      </Art>
    </AppButton>
    <AppButton>
      <Art w={23} h={21} box="371 110 69 63">
        <path d="m393 111 46 14-2 33-44-10z" fill="#9fb1bd" />
        <path d="m396 115 40 12-1 27-40-10z" fill="#37a6f2" />
        <path d="m396 115 40 12-14 20-26-6z" fill="#62bdf7" />
        <path d="m409 153 14 4-5 7-15-4z" fill="#8795a0" />
        <path d="m372 161 9-9 27 6-9 9z" fill="#ccd5da" />
        <path d="m394 168 18-9 20 6-18 9z" fill="#b7c3ca" />
      </Art>
    </AppButton>
    <AppButton>
      <Art w={24} h={22} box="516 111 72 66">
        <path d="m516 131 36-20 36 20v14h-72z" fill="#0f5fb0" />
        <path d="M523 132h58l-29 22z" fill="#f4f4f4" />
        <path d="M516 133l44 22-44 22z" fill="#1c93e6" />
        <path d="m588 133-40 22 40 22z" fill="#33c1f5" />
        <path d="m516 177 30-24 10 0 32 24z" fill="#1f9fe8" />
      </Art>
    </AppButton>
    <AppButton $line={pink(5, 40)}>
      <Art w={23} h={23} box="0 0 46 46">
        <path d="M23 23 42.500 11.700A22.500 22.500 0 0 1 23 45.500l-2-2z" fill="#ffcd46" />
        <path d="M23 23 3.500 11.700A22.500 22.500 0 0 0 23 45.500l9-17z" fill="#1ca261" />
        <path d="M23 13h19.900A22.500 22.500 0 0 1 23 45.500L32 28z" fill="#ffcd46" />
        <path d="M3.500 11.700A22.500 22.500 0 0 1 43 13H23L14 28z" fill="#dd5144" />
        <circle cx="23" cy="23" r="10.500" fill="#f3f3f3" />
        <circle cx="23" cy="23" r="8.300" fill="#4c8bf5" />
      </Art>
    </AppButton>
    <AppButton>
      <Art w={23} h={23} box="810 108 69 69">
        <path d="M833 126v-6c0-13 22-13 22 0v6M838 126v-6c0-15 17-12 21 0" stroke="#ddd" strokeWidth="3" />
        <path d="M810 126h69v46q0 5-5 5h-59q-5 0-5-5z" fill="#fff" />
        <path d="M828 135h15v15h-15z" fill="#f25022" /><path d="M846 135h15v15h-15z" fill="#7fba00" />
        <path d="M828 153h15v15h-15z" fill="#00a4ef" /><path d="M846 153h15v15h-15z" fill="#ffb900" />
      </Art>
    </AppButton>
    <AppButton>
      <Art w={22} h={19} box="960 116 66 57">
        <path d="M960 117h24l4 6h36v44h-64z" fill="#e0a21b" />
        <path d="M960 126h28l3-5h33v46h-64z" fill="#ffd766" />
        <path d="M972 171v-24h42v24h-11v-13h-20v13z" fill="#3d96d9" />
      </Art>
    </AppButton>
    <AppButton>
      <Art w={24} h={24}>
        <path d="M2 0h20l2 2v20l-2 2H2l-2-2V2z" fill="#ee6f1f" />
        <path d="M2 1h20v2H2z" fill="#f6a878" />
        <path d="M8 6.500c3 0 2 3.500 4 3.500s1-3.500 4-3.500c4 0 4 4 2 5.500 2 1.500 2 5.500-2 5.500-3 0-2-3.500-4-3.500s-1 3.500-4 3.500c-4 0-4-4-2-5.500-2-1.500-2-5.500 2-5.500z" stroke="#fff" strokeWidth="2.700" />
      </Art>
    </AppButton>
    <AppButton>
      <Art w={24} h={24}>
        <rect width="24" height="24" rx="2" fill="#4d4d4d" />
        <path d="M6 7.500 18 4v4.500L11.500 10.500 18 12.500V16L6 19.500V15l6.500-2L6 11z" fill="#ff9800" />
      </Art>
    </AppButton>
    <AppButton>
      <Art w={24} h={23} box="198 110 72 69">
        <circle cx="260" cy="124" r="8" fill="#5059c9" />
        <circle cx="236" cy="122" r="11" fill="#7b83eb" />
        <path d="M248 135h22v20q-2 14-16 13z" fill="#5059c9" />
        <path d="M220 135h34v24q-2 18-18 18t-17-18z" fill="#7b83eb" />
        <path d="M198 127h36v34h-36z" fill="#4b53bc" />
        <path d="M207 136h18M216 136v19" stroke="#fff" strokeWidth="4" />
      </Art>
    </AppButton>
    <AppButton>
      <Art w={22} h={24} box="347 108 66 72">
        <path d="m380 108 32 17-32 18-32-18z" fill="#b5cc40" />
        <path d="m348 125 32 18v37l-32-19z" fill="#d04f72" />
        <path d="m412 125-32 18v37l32-19z" fill="#3478b5" />
        <path d="m380 122 18 10v24l-18 11-18-11v-24z" fill="#eee" />
        <path d="m380 122 18 10-18 11-18-11z" fill="#fff" />
        <path d="m398 132-18 11v24l18-11z" fill="#cfcfcf" />
      </Art>
    </AppButton>
    <AppButton>
      <svg width="24" height="24" viewBox="0 0 24 24">
        <defs>
          <linearGradient id="edgeTop" x1="0" y1=".6" x2="1" y2=".4"><stop offset="0" stopColor="#1f9de0" /><stop offset=".5" stopColor="#2fc3d8" /><stop offset="1" stopColor="#6bdc52" /></linearGradient>
        </defs>
        <circle cx="12" cy="12" r="12" fill="#0f78cf" />
        <path d="M0 12C0 5 5 0 12 0s12 5 12 10c0 4-3 6.500-6.500 6.500-3 0-4.200-1.200-3.500-2 2.500-3-.5-7.500-5-7.500C4.500 7 1 9 0 12z" fill="url(#edgeTop)" />
        <path d="M8.500 12c-2 6 3 11 9 10.500C14 24.500 9 24 6 20c-2.500-3.500-1-8 2.500-8z" fill="#0c4fa0" />
        <path d="M13.500 11c2 2-1 3.500.5 5 2 2 6 1.500 9.300-.8l.7 2.300-2 2.300c-5 3-10 1-10.500-3.300-.3-2.500.5-4.500 2-5.500z" fill="#1e1c1c" />
      </svg>
    </AppButton>
    <AppButton $on $line={pink(1, 48)}><PptGlyph w={22} h={22} /></AppButton>
    <AppButton $line={`${pink(5, 31)}, ${pink(37, 8, '#a04c61')}`}>
      <Art w={22} h={22}>
        <path d="M12 3h9.500v16H12z" fill="#fff" stroke="#2b579a" />
        <path d="M14 6h6M14 8.500h6M14 11h6M14 13.500h6M14 16h6" stroke="#2b579a" strokeWidth="1.200" />
        <path d="M0 2.500 13 0v22L0 19.500z" fill="#2b579a" />
        <path d="m2.700 7.500 1.700 7 2-7 2 7 1.900-7" stroke="#fff" strokeWidth="1.500" />
      </Art>
    </AppButton>
    <Tray>
      <Art w={12} h={7}><path d="m.7 6.300 5.300-5.300 5.300 5.300" stroke="#fff" strokeWidth="1.300" /></Art>
      <Slot $ml={13}>
        <Art w={13} h={13}>
          <path d="M1 12.500C1 6 6 1 12.500 1M3.500 12.500c0-5 4-9 9-9M6 12.500c0-3.500 3-6.500 6.500-6.500M8.500 12.500c0-2.500 2-4 4-4" stroke="#ddd" strokeWidth="1.100" />
          <circle cx="11.500" cy="11.700" r="1.300" fill="#fff" />
        </Art>
      </Slot>
      <Slot $ml={7}>
        <Art w={18} h={14}>
          <path d="M.7 4.700h2.500L7 1.200v11.600L3.200 9.300H.7zM9.200 5c1 1.300 1 2.700 0 4M11.500 3c2 2.500 2 5.500 0 8M14 1.300c2.700 3.400 2.700 8 0 11.400" stroke="#eee" strokeWidth="1.100" />
        </Art>
      </Slot>
      <Slot $ml={8}><TrayText $w={34}>ENG<br />INTL</TrayText></Slot>
      <TrayText $w={56} $c>6:48 PM<br />7/23/2020</TrayText>
      <Slot $ml={15} $mt={4}>
        <Art w={26} h={26}>
          <path d="M1 2h16v13h-3l-3 3.500V15H1z" fill="#fff" />
          <path d="M4 5.500h10M4 8.500h10M4 11.500h7" stroke="#1e1c1c" />
          <circle cx="16.500" cy="17.300" r="8" fill="#3a3a3a" stroke="#8a8a8a" />
          <text x="16.500" y="21.300" textAnchor="middle" fill="#fff" fontSize="11">1</text>
        </Art>
      </Slot>
      <Slot $ml={11}><ShowDesktop /></Slot>
    </Tray>
  </TaskbarRow>
);

export default function App() {
  return (
    <Window>
      <Global />
      <Title />
      <TabRow>
        <FileTab>FILE</FileTab>
        {tabs.map(([t, w]) => <Tab key={t} $w={w}>{t}</Tab>)}
        <Tab $w={146} $active>OFFICE TIMELINE FREE</Tab>
        <SignIn>Sign in</SignIn>
      </TabRow>
      <RibbonBar />
      <Work>
        <Thumbs>
          <ThumbRow $gap={16}><ThumbNo>1</ThumbNo><ThumbFrame><Thumb1 /></ThumbFrame></ThumbRow>
          <ThumbRow><ThumbNo $on>2</ThumbNo><ThumbFrame $on><Thumb2 /></ThumbFrame></ThumbRow>
        </Thumbs>
        <Editor>
          <SlideWrap><Slide /></SlideWrap>
          <VScroll>
            <ScrollButton><Art w={7} h={4}><path d="M0 4h7L3.500 0z" fill="#666" /></Art></ScrollButton>
            <VTrack />
            <VThumb />
            <ScrollButton><Art w={7} h={4}><path d="M0 0h7L3.500 4z" fill="#666" /></Art></ScrollButton>
            <Slot $mt={2}><ScrollButton $bare><Art w={7} h={8}><path d="M0 4h7L3.500 0zM0 8h7L3.500 4z" fill="#666" /></Art></ScrollButton></Slot>
          </VScroll>
          <HScroll>
            <ScrollButton><Art w={4} h={7}><path d="M4 0v7L0 3.500z" fill="#666" /></Art></ScrollButton>
            <HTrack $w={22} />
            <HThumb />
            <HTrack $w={22} />
            <ScrollButton><Art w={4} h={7}><path d="M0 0v7l4-3.500z" fill="#666" /></Art></ScrollButton>
          </HScroll>
          <ScrollTail>
            <Slot $mt={-3}><ScrollButton $bare><Art w={7} h={8}><path d="M0 0h7L3.500 4zM0 4h7L3.500 8z" fill="#666" /></Art></ScrollButton></Slot>
          </ScrollTail>
        </Editor>
        <StylePane />
      </Work>
      <Status />
      <Taskbar />
    </Window>
  );
}
